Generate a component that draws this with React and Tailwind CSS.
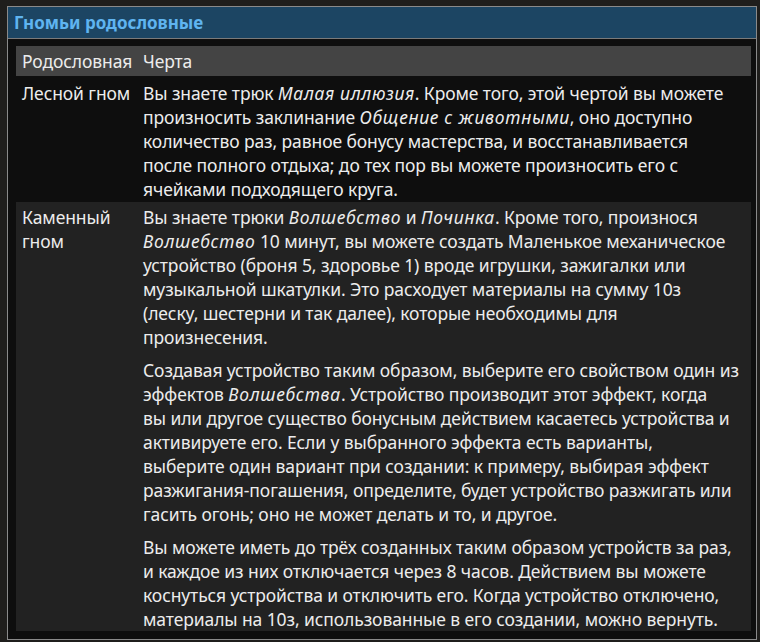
import React from 'react';

// *текст* = курсив, строки разбиты как в оригинале
const rows = [
    {
        name: 'Лесной гном',
        paragraphs: [
            [
                'Вы знаете трюк *Малая иллюзия*. Кроме того, этой чертой вы можете',
                'произносить заклинание *Общение с животными*, оно доступно',
                'количество раз, равное бонусу мастерства, и восстанавливается',
                'после полного отдыха; до тех пор вы можете произносить его с',
                'ячейками подходящего круга.'
            ]
        ]
    },
    {
        name: 'Каменный гном',
        paragraphs: [
            [
                'Вы знаете трюки *Волшебство* и *Починка*. Кроме того, произнося',
                '*Волшебство* 10 минут, вы можете создать Маленькое механическое',
                'устройство (броня 5, здоровье 1) вроде игрушки, зажигалки или',
                'музыкальной шкатулки. Это расходует материалы на сумму 10з',
                '(леску, шестерни и так далее), которые необходимы для',
                'произнесения.'
            ],
            [
                'Создавая устройство таким образом, выберите его свойством один из',
                'эффектов *Волшебства*. Устройство производит этот эффект, когда',
                'вы или другое существо бонусным действием касаетесь устройства и',
                'активируете его. Если у выбранного эффекта есть варианты,',
                'выберите один вариант при создании: к примеру, выбирая эффект',
                'разжигания-погашения, определите, будет устройство разжигать или',
                'гасить огонь; оно не может делать и то, и другое.'
            ],
            [
                'Вы можете иметь до трёх созданных таким образом устройств за раз,',
                'и каждое из них отключается через 8 часов. Действием вы можете',
                'коснуться устройства и отключить его. Когда устройство отключено,',
                'материалы на 10з, использованные в его создании, можно вернуть.'
            ]
        ]
    }
];

const Line = ({ text }) => (
    <span className="block whitespace-nowrap">
        {text.split('*').map((chunk, idx) =>
            idx % 2 === 1 ? <em key={idx} className="italic tracking-[0.7px]">{chunk}</em> : chunk
        )}
    </span>
);

export default function App() {
    return (
        <div className="h-[642px] bg-[#1f1e1c] pt-[6px] pl-[7px] font-['Noto_Sans',sans-serif] text-[#ececec]">
            <div className="w-[750px] border border-[#8a8a8a] bg-[#0e0e0e]">
                <div className="h-[32px] bg-[#1c4563] border-b border-[#7a7a7a] px-[6px] flex items-center">
                    <h1 className="text-[17px] font-bold text-[#5fb4f0]">Гномьи родословные</h1>
                </div>
                <div className="pt-[7px] pl-[8px] pr-[5px] pb-[8px]">
                    <table className="w-full table-fixed text-[17.5px] leading-[24px] tracking-[-0.1px]">
                        <thead>
                            <tr className="bg-[#444444]">
                                <th className="w-[127px] h-[30px] px-[6px] text-left font-normal">Родословная</th>
                                <th className="text-left font-normal">Черта</th>
                            </tr>
                        </thead>
                        <tbody>
                            {rows.map((row, ri) => (
                                <tr key={ri} className={ri % 2 === 1 ? 'bg-[#222222]' : 'bg-[#0e0e0e]'}>
                                    <td className={`align-top px-[6px] ${ri === 0 ? 'pt-[5px]' : 'pt-[3px]'}`}>{row.name}</td>
                                    <td className={`align-top ${ri === 0 ? 'pt-[5px] pb-[1px]' : 'pt-[3px]'}`}>
                                        <div className="flex flex-col gap-[9px]">
                                            {row.paragraphs.map((lines, pi) => (
                                                <p key={pi}>
                                                    {lines.map((l, li) => <Line key={li} text={l} />)}
                                                </p>
                                            ))}
                                        </div>
                                    </td>
                                </tr>
                            ))}
                        </tbody>
                    </table>
                </div>
            </div>
        </div>
    );
}
